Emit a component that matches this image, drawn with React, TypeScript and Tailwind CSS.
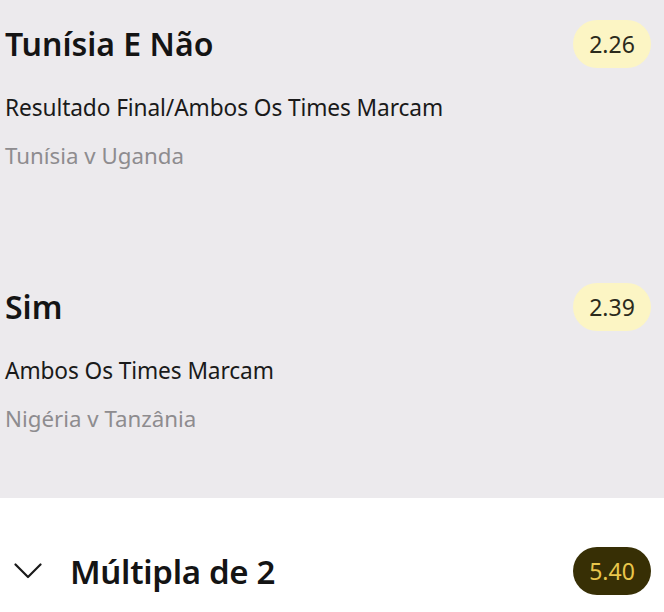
const selections = [
  { pick: "Tunísia E Não", market: "Resultado Final/Ambos Os Times Marcam", event: "Tunísia v Uganda", odds: "2.26" },
  { pick: "Sim", market: "Ambos Os Times Marcam", event: "Nigéria v Tanzânia", odds: "2.39" },
]

export default function App() {
  return (
    <div className="w-[664px] h-[612px] overflow-hidden bg-white font-['Noto_Sans',sans-serif]">
      {/* Selections */}
      <div className="bg-[#ECEAED] h-[498px] pt-[20px]">
        {selections.map((s, i) => (
          <div key={i} className="h-[263px] pl-[5px] pr-[13px]">
            <div className="flex items-center justify-between h-[48px]">
              <span className="text-[32px] font-semibold text-[#141414] leading-none">{s.pick}</span>
              <span className="h-[48px] w-[78px] rounded-full bg-[#FCF5C4] flex items-center justify-center text-[23px] text-[#2B2A1C]">
                {s.odds}
              </span>
            </div>
            <div className="mt-[26px] text-[22.7px] text-[#1A1A1A] leading-[28px] tracking-[-0.1px]">{s.market}</div>
            <div className="mt-[20px] text-[22.3px] text-[#8E8C8F] leading-[28px]">{s.event}</div>
          </div>
        ))}
      </div>

      {/* Multiple */}
      <div className="flex items-center justify-between pl-[14px] pr-[13px] mt-[49px]">
        <div className="flex items-center gap-[28px]">
          <svg width="28" height="16" viewBox="0 0 28 16" fill="none" stroke="#1a1a1a" strokeWidth="2.2" strokeLinecap="round" strokeLinejoin="round">
            <polyline points="1.5,1.5 14,14 26.5,1.5" />
          </svg>
          <span className="text-[33px] font-semibold text-[#141414] leading-none tracking-[-0.3px]">Múltipla de 2</span>
        </div>
        <span className="h-[48px] w-[78px] rounded-full bg-[#372F05] flex items-center justify-center text-[23px] text-[#E9C64B]">
          5.40
        </span>
      </div>
    </div>
  )
}
